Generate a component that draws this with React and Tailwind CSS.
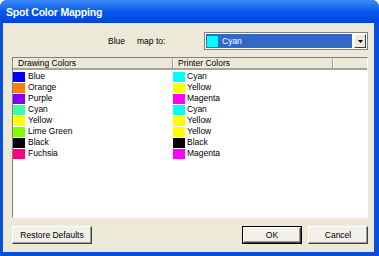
const drawing = [
  ['Blue', '#0000FF'],
  ['Orange', '#FF8000'],
  ['Purple', '#8000FF'],
  ['Cyan', '#40FFA0'],
  ['Yellow', '#FFFF00'],
  ['Lime Green', '#80FF00'],
  ['Black', '#000000'],
  ['Fuchsia', '#FF0080'],
]

const printer = [
  ['Cyan', '#00FFFF'],
  ['Yellow', '#FFFF00'],
  ['Magenta', '#FF00FF'],
  ['Cyan', '#00FFFF'],
  ['Yellow', '#FFFF00'],
  ['Yellow', '#FFFF00'],
  ['Black', '#000000'],
  ['Magenta', '#FF00FF'],
]

function Button({ children, width, isDefault }) {
  return (
    <div className={`h-[18px] ${width} ${isDefault ? 'border border-black' : ''}`}>
      <div className="h-full w-full flex items-center justify-center bg-[#F1F0EA] border-t border-l border-white border-b border-r border-b-[#404040] border-r-[#404040] shadow-[inset_-1px_-1px_0_#9A9A9A]">
        {children}
      </div>
    </div>
  )
}

export default function App() {
  return (
    <div className="w-[379px] h-[256px] flex flex-col bg-[#0A4FD9] rounded-t-[7px] overflow-hidden text-[8.5px] leading-none text-black font-['Liberation_Sans',sans-serif]">
      <div className="h-[23px] shrink-0 flex items-center pl-[6px] pt-[2px] bg-linear-to-b from-[#3C8CF8] via-[#0858EC] to-[#0046D6] text-white font-bold text-[10.5px] tracking-[-0.2px]">
        Spot Color Mapping
      </div>

      <div className="flex-1 ml-[3px] mr-[5px] mb-[4px] bg-[#ECE9D8] flex flex-col pt-[9px] pl-[9px] pr-[6px]">
        <div className="h-[18px] flex items-center">
          <span className="ml-[96px]">Blue</span>
          <span className="ml-[12px]">map to:</span>
          <div className="ml-auto w-[164px] h-[18px] border border-[#808080] bg-white p-[1px] flex">
            <div className="flex-1 bg-[#316AC5] flex items-center text-white">
              <div className="ml-[1px] w-[11px] h-[11px] bg-[#00FFFF]" />
              <span className="ml-[4px]">Cyan</span>
            </div>
            <div className="ml-[2px] w-[12px] h-[14px] bg-[#ECE9D8] border-t border-l border-white border-b border-r border-b-[#404040] border-r-[#404040] flex items-center justify-center">
              <svg width="5" height="3" viewBox="0 0 5 3">
                <path d="M0 0h5L2.5 3z" fill="#000" />
              </svg>
            </div>
          </div>
        </div>

        <div className="mt-[7px] h-[161px] border-t border-l border-[#808080] border-b border-r border-b-white border-r-white bg-white flex flex-col">
          <div className="h-[12px] flex bg-[#ECE9D8] border-b-2 border-[#A7A596]">
            <div className="w-[160px] flex items-center pl-[5px] border-r border-[#9D9D9D] shadow-[inset_1px_0_0_white]">Drawing Colors</div>
            <div className="w-[160px] flex items-center pl-[5px] border-r border-[#9D9D9D] shadow-[inset_1px_0_0_white]">Printer Colors</div>
            <div className="flex-1 shadow-[inset_1px_0_0_white]" />
          </div>
          <div className="flex flex-col pt-[1px]">
            {drawing.map(([name, color], i) => (
              <div key={i} className="h-[11px] flex">
                <div className="w-[160px] flex items-center">
                  <div className="w-[12px] h-[10px]" style={{ backgroundColor: color }} />
                  <span className="ml-[3px]">{name}</span>
                </div>
                <div className="w-[160px] flex items-center">
                  <div className="w-[12px] h-[10px]" style={{ backgroundColor: printer[i][1] }} />
                  <span className="ml-[2px]">{printer[i][0]}</span>
                </div>
              </div>
            ))}
          </div>
        </div>

        <div className="mt-[8px] flex">
          <Button width="w-[80px]">Restore Defaults</Button>
          <div className="ml-auto">
            <Button width="w-[60px]" isDefault>OK</Button>
          </div>
          <div className="ml-[6px]">
            <Button width="w-[60px]">Cancel</Button>
          </div>
        </div>
      </div>
    </div>
  )
}
